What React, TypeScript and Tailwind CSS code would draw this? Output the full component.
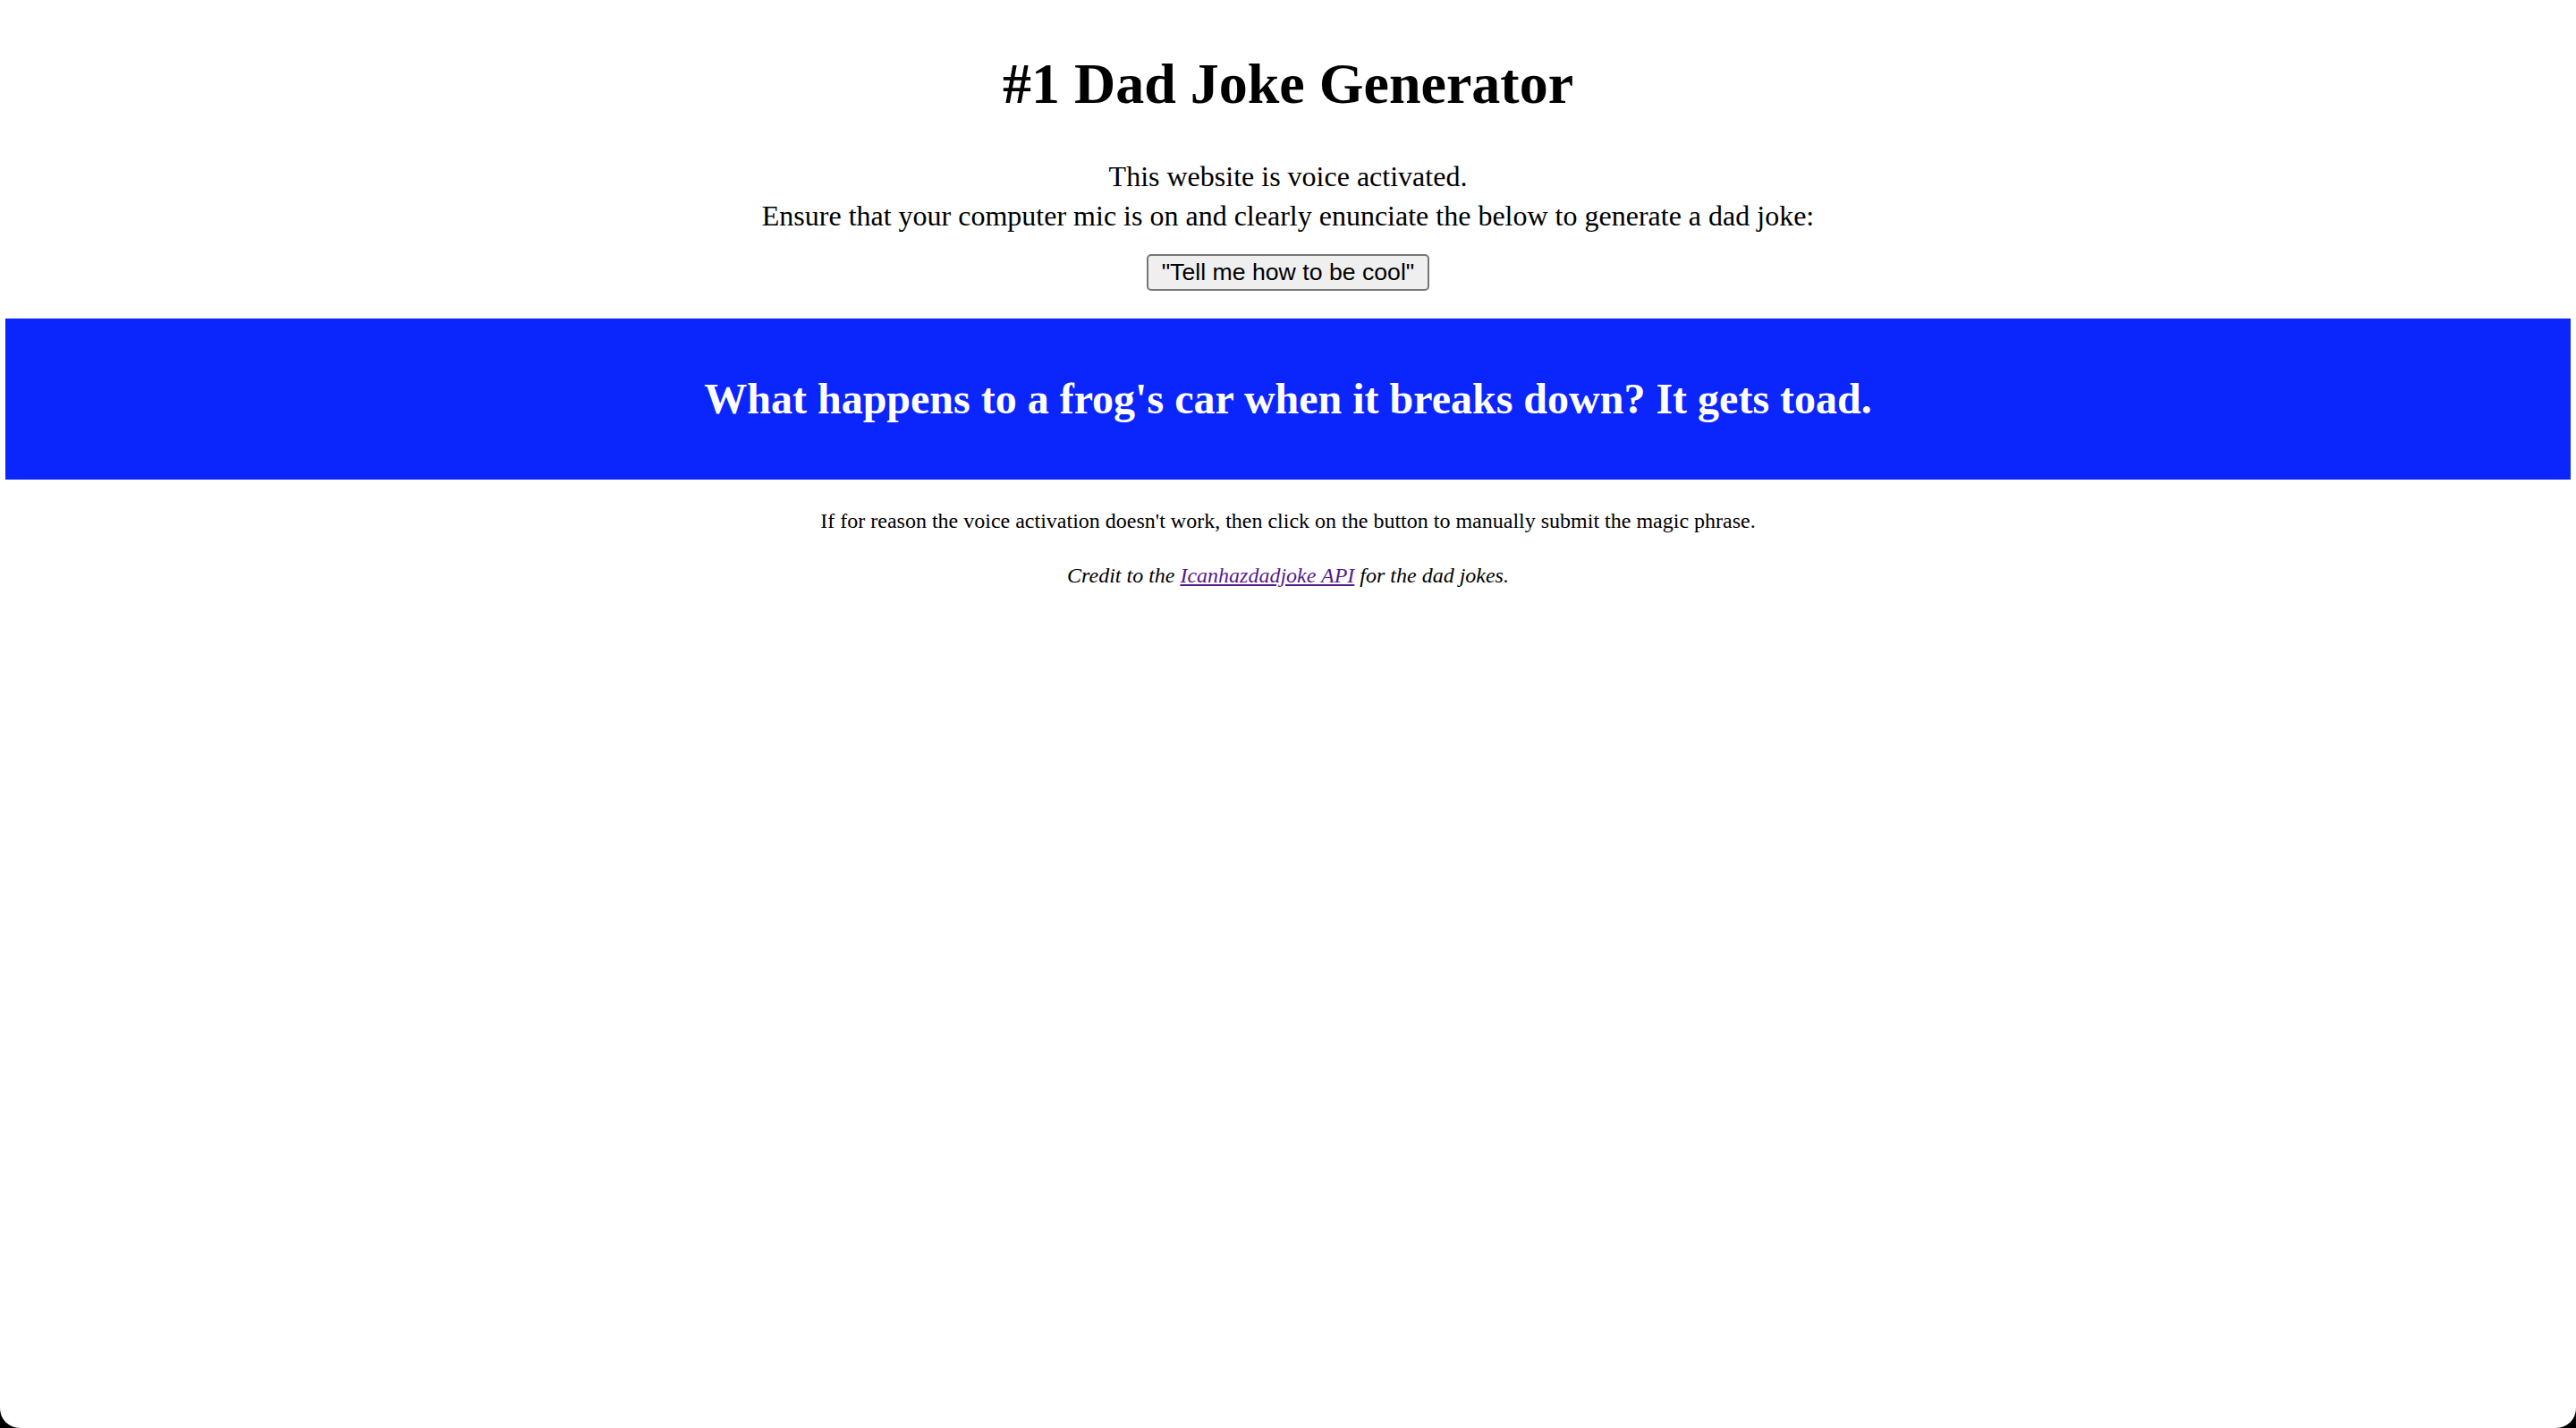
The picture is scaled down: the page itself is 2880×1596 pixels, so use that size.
const serif = { fontFamily: '"Liberation Serif", "Times New Roman", serif' };

const App = () => {
  return (
    <div className="min-h-screen w-full bg-black">
      <div
        className="flex h-[1596px] w-full flex-col items-center overflow-hidden rounded-b-[22px] bg-white text-black"
        style={serif}
      >
        <h1 className="mt-[57px] text-center text-[64px] font-bold leading-[74px]">
          #1 Dad Joke Generator
        </h1>

        <p className="mt-[44px] text-center text-[32px] leading-[44px]">
          This website is voice activated.
          <br />
          Ensure that your computer mic is on and clearly enunciate the below to
          generate a dad joke:
        </p>

        <button
          type="button"
          className="mt-[21px] flex h-[41px] w-[316px] items-center justify-center rounded-[5px] border-2 border-[#767676] bg-[#efefef] text-[26.67px] leading-none text-black"
          style={{ fontFamily: '"Liberation Sans", Arial, sans-serif' }}
        >
          "Tell me how to be cool"
        </button>

        <div className="mt-[31px] flex h-[180px] w-[calc(100%-12px)] items-center justify-center bg-[#0b25fd]">
          <h2 className="text-center text-[48px] font-bold leading-none text-white">
            What happens to a frog's car when it breaks down? It gets toad.
          </h2>
        </div>

        <p className="mt-[31px] text-center text-[24px] leading-[30px]">
          If for reason the voice activation doesn't work, then click on the
          button to manually submit the magic phrase.
        </p>

        <p className="mt-[31px] text-center text-[24px] italic leading-[30px]">
          Credit to the{" "}
          <a href="#" className="text-[#551a8b] underline">
            Icanhazdadjoke API
          </a>{" "}
          for the dad jokes.
        </p>
      </div>
    </div>
  );
};

export default App;
